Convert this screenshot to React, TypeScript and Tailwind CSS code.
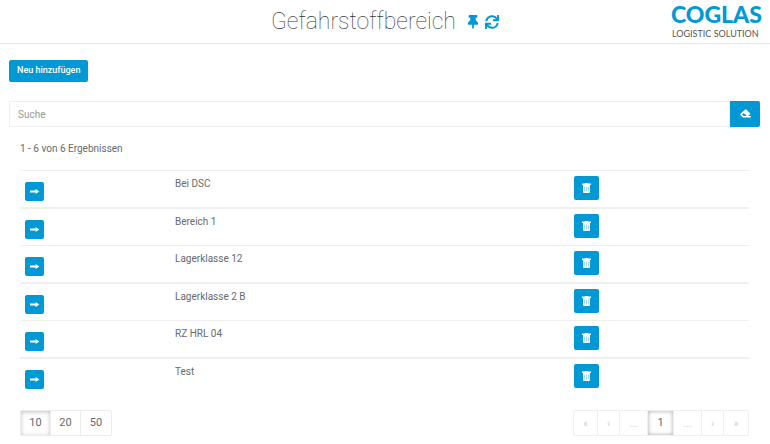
import { useState } from "react";
import { FaSync, FaThumbtack } from "react-icons/fa";

const areas = ["Bei DSC", "Bereich 1", "Lagerklasse 12", "Lagerklasse 2 B", "RZ HRL 04", "Test"];

const pageSizes = [10, 20, 50];

const pages = [
  { label: "«", name: "Erste Seite", width: "w-6" },
  { label: "‹", name: "Vorherige Seite", width: "w-[22px]" },
  { label: "...", name: "Frühere Seiten", width: "w-7" },
  { label: "1", name: "Seite 1", width: "w-[26px]", active: true },
  { label: "...", name: "Spätere Seiten", width: "w-7" },
  { label: "›", name: "Nächste Seite", width: "w-[22px]" },
  { label: "»", name: "Letzte Seite", width: "w-6" },
];

function ArrowIcon() {
  return (
    <svg viewBox="0 0 11 7" className="h-[7px] w-[11px]" fill="currentColor" aria-hidden="true">
      <path d="M1 2.5h5.6V1L10.4 3.5 6.6 6V4.5H1z" />
    </svg>
  );
}

function TrashIcon() {
  return (
    <svg viewBox="0 0 9 10" className="mb-px h-2.5 w-[9px]" fill="currentColor" aria-hidden="true">
      <path d="M3 0h3l.5.5H9V2H0V.5h2.5z" />
      <path d="M1 2h7v7a1 1 0 0 1-1 1H2a1 1 0 0 1-1-1z" />
      <path d="M2.5 3.5v5M4.5 3.5v5M6.5 3.5v5" stroke="#0099d5" strokeOpacity="0.5" strokeWidth="0.7" />
    </svg>
  );
}

function EraserIcon() {
  return (
    <svg viewBox="0 0 11 9" className="mb-px h-[9px] w-[11px]" fill="currentColor" aria-hidden="true">
      <path
        fillRule="evenodd"
        d="M6.3.6 10 4.3q.5.5 0 1L8 7h2.8v1.5H2.9L.5 6q-.5-.6 0-1.2L5.2.6q.5-.5 1.1 0zM3.6 4.2 2.1 5.5l1.4 1.4h2.3l.8-.7z"
      />
    </svg>
  );
}

function Header() {
  return (
    <header className="grid h-11 grid-cols-[1fr_auto_1fr] items-center border-b border-[#e7e7e7]">
      <span />
      <div className="flex items-center">
        <h1 className="text-[23px] leading-8 font-thin text-[#303234]">Gefahrstoffbereich</h1>
        <button type="button" aria-label="Anheften" className="ml-2.5 text-[#0099d5]">
          <FaThumbtack size={14} />
        </button>
        <button type="button" aria-label="Aktualisieren" className="ml-[5px] text-[#0099d5]">
          <FaSync size={14} />
        </button>
      </div>
      <svg
        viewBox="0 0 90 34"
        role="img"
        aria-label="COGLAS Logistic Solution"
        className="mr-2 h-[34px] w-[90px] justify-self-end overflow-visible"
      >
        <text x="-1" y="18" fontFamily="Lato, sans-serif" fontSize="23" fontWeight="900" fill="#0099d5">
          COGLAS
        </text>
        <text x="0" y="32" fontFamily="Lato, sans-serif" fontSize="9" fill="#555555">
          LOGISTIC SOLUTION
        </text>
      </svg>
    </header>
  );
}

function AreaTable() {
  return (
    <table className="w-full table-fixed border-separate border-spacing-0 border-t border-[#f0f0f0]">
      <colgroup>
        <col className="w-[150px]" />
        <col />
        <col className="w-[180px]" />
      </colgroup>
      <tbody>
        {areas.map((area) => (
          <tr
            key={area}
            className="odd:h-[38px] even:h-[37px] *:border-[#f0f0f0] odd:*:border-b-2 even:*:border-b last:*:border-transparent"
          >
            <td className="pt-[11px] pl-[5px] align-top">
              <button
                type="button"
                aria-label={`${area} öffnen`}
                className="flex size-[19px] items-center justify-center rounded-[2px] bg-[#0099d5] text-white"
              >
                <ArrowIcon />
              </button>
            </td>
            <td className="pt-[5px] pl-[5px] align-top leading-4">{area}</td>
            <td className="pt-[5px] pl-[5px] align-top">
              <button
                type="button"
                aria-label={`${area} löschen`}
                className="flex h-6 w-[25px] items-center justify-center rounded-[2px] bg-[#0099d5] text-white"
              >
                <TrashIcon />
              </button>
            </td>
          </tr>
        ))}
      </tbody>
    </table>
  );
}

function Footer({ pageSize, onPageSize }: { pageSize: number; onPageSize: (size: number) => void }) {
  return (
    <footer className="mt-3.5 flex items-center justify-between">
      <div className="flex h-[26px] divide-x divide-[#ededed] overflow-hidden rounded-[2px] border border-[#ededed] text-[11px]">
        {pageSizes.map((size) => (
          <button
            key={size}
            type="button"
            aria-pressed={size === pageSize}
            onClick={() => onPageSize(size)}
            className="w-[30px] aria-pressed:shadow-[inset_0_1px_4px_rgba(0,0,0,0.25)]"
          >
            {size}
          </button>
        ))}
      </div>
      <nav
        aria-label="Seiten"
        className="flex h-[26px] divide-x divide-[#f0f0f0] rounded-[2px] border border-[#f0f0f0] text-[10px]"
      >
        {pages.map((page) => (
          <button
            key={page.name}
            type="button"
            aria-label={page.name}
            disabled={!page.active}
            className={`${page.width} ${
              page.active ? "text-[11px] shadow-[inset_0_0_4px_rgba(0,0,0,0.35)]" : "text-[#cfcfcf]"
            }`}
          >
            {page.label}
          </button>
        ))}
      </nav>
    </footer>
  );
}

export default function App() {
  const [query, setQuery] = useState("");
  const [pageSize, setPageSize] = useState(10);

  return (
    <div className="min-h-screen bg-white font-[Roboto,sans-serif] text-[10px] text-[#676a6c]">
      <Header />
      <main className="pt-4 pr-2.5 pl-[9px]">
        <button type="button" className="block h-[22px] rounded-[2px] bg-[#0099d5] px-2 text-[9px] font-medium text-white">
          Neu hinzufügen
        </button>
        <div className="mt-[19px] flex">
          <input
            type="text"
            aria-label="Suche"
            placeholder="Suche"
            value={query}
            onChange={(event) => setQuery(event.target.value)}
            className="h-[26px] min-w-0 flex-1 border border-[#f0f0f0] px-2 outline-none placeholder:text-[#999999]"
          />
          <button
            type="button"
            aria-label="Suche leeren"
            onClick={() => setQuery("")}
            className="flex w-[30px] items-center justify-center rounded-r-[2px] bg-[#0099d5] text-white"
          >
            <EraserIcon />
          </button>
        </div>
        <div className="px-[11px]">
          <p className="mt-[14px] mb-[13px] leading-4">1 - 6 von 6 Ergebnissen</p>
          <AreaTable />
          <Footer pageSize={pageSize} onPageSize={setPageSize} />
        </div>
      </main>
    </div>
  );
}
